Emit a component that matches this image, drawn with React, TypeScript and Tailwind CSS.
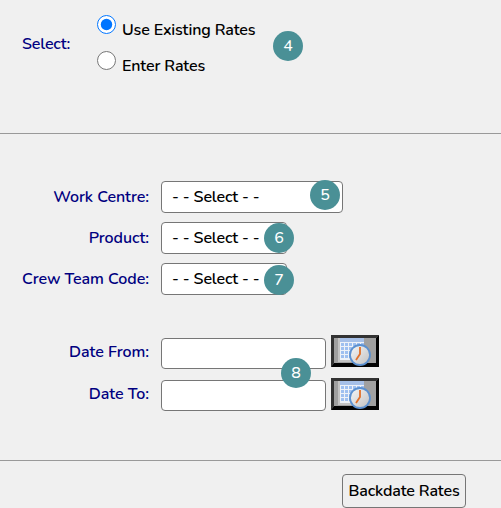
const font = 'font-["Nunito","Noto_Sans","Open_Sans",sans-serif]';

function Badge({ n, className }: { n: number; className: string }) {
  return (
    <span className={`absolute flex h-[30px] w-[30px] items-center justify-center rounded-full bg-[#4a9096] text-[16px] font-medium text-white ${className}`}>
      {n}
    </span>
  );
}

function CalendarIcon({ className }: { className: string }) {
  return (
    <svg width="48" height="32" viewBox="0 0 48 32" className={`block shrink-0 ${className}`}>
      <defs>
        <linearGradient id="face" x1="0" y1="0" x2="1" y2="1">
          <stop offset="0" stopColor="#f8f8f8" />
          <stop offset="1" stopColor="#c0c0c0" />
        </linearGradient>
      </defs>
      <rect width="48" height="32" fill="#a0a0a0" />
      <path d="M0 0H48L45 3H3V28L0 32Z" fill="#333333" />
      <path d="M0 32L3 28H45V3L48 0V32Z" fill="#030303" />
      <rect x="7" y="3" width="26" height="24" fill="#eef2f8" />
      <path d="M7 27H33V25H9V3H7Z" fill="#c4c4c4" />
      <rect x="9" y="3" width="24" height="4" fill="#a6c0e8" />
      {[10, 14, 18, 22, 26, 30].map((x) =>
        [8, 12, 16, 20].map((y) => (
          <rect key={`${x}-${y}`} x={x} y={y} width="3" height="3" fill="#9fc0f0" />
        ))
      )}
      <circle cx="29" cy="20" r="10" fill="url(#face)" stroke="#5b90d0" strokeWidth="1.8" />
      <path d="M29 12V19L25 25" fill="none" stroke="#e0702a" strokeWidth="1.8" />
    </svg>
  );
}

const selectBox = 'flex h-8 items-center rounded-[4px] border border-[#767676] bg-white pl-2.5 text-[16px] font-semibold tracking-[-0.15px] text-black';
const label = 'text-right text-[16px] font-semibold tracking-[-0.05px] text-[#000080]';
const radioRow = 'flex items-start gap-[6px] text-[16px] font-semibold tracking-[-0.15px] text-black';
const dateBox = 'h-[31px] w-[165px] rounded-[4px] border border-[#767676] bg-white';

export default function App() {
  return (
    <div className={`relative h-[508px] w-[501px] overflow-hidden bg-[#f0f0f0] ${font}`}>
      <section className="h-[134px] border-b border-[#999999] pt-[15px]">
        <div className="flex items-start pl-[22px]">
          <span className="mt-[17px] w-[75px] text-[16px] font-semibold tracking-[-0.15px] text-[#000080]">Select:</span>
          <div className="flex flex-col gap-[9px]">
            <label className={radioRow}>
              <input type="radio" name="mode" defaultChecked className="m-0 h-[19px] w-[19px] accent-[#0075ff]" />
              <span className="mt-[3px]">Use Existing Rates</span>
            </label>
            <label className={radioRow}>
              <input type="radio" name="mode" className="m-0 h-[19px] w-[19px]" />
              <span className="mt-[3px]">Enter Rates</span>
            </label>
          </div>
        </div>
      </section>

      <section className="mt-[47px] grid grid-cols-[149px_auto] items-center justify-start gap-x-3 gap-y-[9px]">
        <span className={label}>Work Centre:</span>
        <div className={`${selectBox} w-[182px]`}>- - Select - -</div>
        <span className={label}>Product:</span>
        <div className={`${selectBox} w-[126px]`}>- - Select - -</div>
        <span className={label}>Crew Team Code:</span>
        <div className={`${selectBox} w-[126px]`}>- - Select - -</div>
      </section>

      <section className="mt-[43px] grid grid-cols-[149px_auto] items-center justify-start gap-x-3 gap-y-[11px]">
        <span className={`${label} pb-[3px]`}>Date From:</span>
        <div className="flex h-[31px] items-start gap-[5px]">
          <div className={dateBox} />
          <CalendarIcon className="-mt-[3px]" />
        </div>
        <span className={`${label} pb-[3px]`}>Date To:</span>
        <div className="flex h-[31px] items-start gap-[5px]">
          <div className={dateBox} />
          <CalendarIcon className="-mt-[2px]" />
        </div>
      </section>

      <footer className="mt-[49px] flex justify-end border-t border-[#999999] pt-[13px] pr-[35px]">
        <button className="h-[34px] w-[124px] rounded-[4px] border border-[#767676] bg-[#efefef] text-[16px] font-semibold tracking-[-0.15px] text-black">
          Backdate Rates
        </button>
      </footer>

      <Badge n={4} className="left-[273px] top-[31px]" />
      <Badge n={5} className="left-[310px] top-[180px]" />
      <Badge n={6} className="left-[264px] top-[223px]" />
      <Badge n={7} className="left-[264px] top-[265px]" />
      <Badge n={8} className="left-[281px] top-[358px]" />
    </div>
  );
}
